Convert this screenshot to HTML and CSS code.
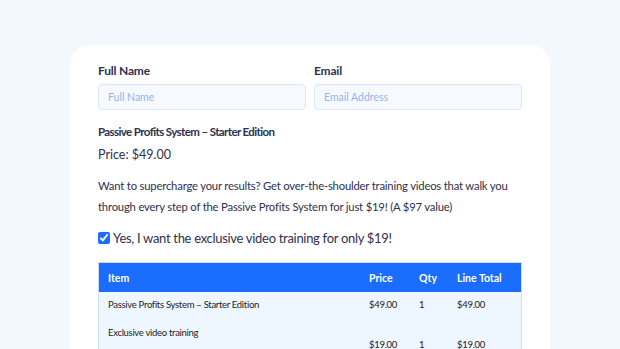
FILE: index.html
```html
<!DOCTYPE html>
<html lang="en">
<head>
    <meta charset="UTF-8">
    <meta name="viewport" content="width=device-width, initial-scale=1.0">
    <title>Checkout</title>
    <link rel="stylesheet" href="styles.css">
</head>
<body>
<main class="checkout">
    <div class="fields">
        <label class="field">
            <span class="field-label">Full Name</span>
            <input type="text" placeholder="Full Name">
        </label>
        <label class="field">
            <span class="field-label">Email</span>
            <input type="email" placeholder="Email Address">
        </label>
    </div>

    <h3 class="product">Passive Profits System – Starter Edition</h3>
    <p class="price">Price: $49.00</p>

    <p class="pitch">Want to supercharge your results? Get over-the-shoulder training videos that walk you through every step of the Passive Profits System for just $19! (A $97 value)</p>

    <label class="bump">
        <input type="checkbox" checked>
        <span>Yes, I want the exclusive video training for only $19!</span>
    </label>

    <table class="summary">
        <thead>
            <tr>
                <th>Item</th>
                <th class="col-price">Price</th>
                <th class="col-qty">Qty</th>
                <th class="col-total">Line Total</th>
            </tr>
        </thead>
        <tbody>
            <tr>
                <td>Passive Profits System – Starter Edition</td>
                <td>$49.00</td>
                <td>1</td>
                <td>$49.00</td>
            </tr>
            <tr class="bump-row">
                <td>Exclusive video training<br>&nbsp;</td>
                <td>$19.00</td>
                <td>1</td>
                <td>$19.00</td>
            </tr>
        </tbody>
    </table>
</main>
</body>
</html>
```

FILE: styles.css
```css
body {
    font-family: "Lato", "Noto Sans", sans-serif;
    background-color: #f3f7fe;
    color: #2f3150;
    margin: 0;
    padding: 45px 70px 0;
}
.checkout {
    background-color: #fff;
    border-radius: 20px;
    padding: 18px 28px 30px;
    min-height: 400px;
}
.fields {
    display: grid;
    grid-template-columns: 1fr 1fr;
    gap: 8px;
}
.field {
    display: flex;
    flex-direction: column;
    gap: 5px;
}
.field-label {
    font-size: 12px;
    line-height: 16px;
    font-weight: 700;
    letter-spacing: -0.2px;
    color: #2f3150;
}
.field input {
    height: 26px;
    box-sizing: border-box;
    border: 1px solid #d9e7fd;
    border-radius: 4px;
    background-color: #f6faff;
    padding: 0 9px;
    font-family: inherit;
    font-size: 10.5px;
}
.field input::placeholder {
    color: #93b3ee;
}
.product {
    font-size: 11.5px;
    line-height: 15px;
    font-weight: 700;
    letter-spacing: -0.6px;
    margin: 14px 0 0;
}
.price {
    font-size: 12.5px;
    line-height: 16px;
    margin: 8px 0 0;
}
.pitch {
    font-size: 11.3px;
    line-height: 21px;
    letter-spacing: -0.2px;
    margin: 12px 0 0;
}
.bump {
    display: flex;
    align-items: center;
    gap: 3px;
    font-size: 13px;
    line-height: 18px;
    letter-spacing: -0.3px;
    margin-top: 12px;
}
.bump input {
    margin: 0;
    width: 12px;
    height: 12px;
    accent-color: #1a6dff;
}
.summary {
    width: 100%;
    margin-top: 15px;
    border-collapse: collapse;
    border: 1px solid #cfdcee;
    table-layout: fixed;
}
.summary th {
    background-color: #1a6dff;
    color: #fff;
    font-size: 10.5px;
    font-weight: 700;
    text-align: left;
    height: 29px;
    padding: 0 9px;
    white-space: nowrap;
}
.summary td {
    background-color: #eef6ff;
    font-size: 9.5px;
    line-height: 14px;
    letter-spacing: -0.3px;
    padding: 6px 9px;
    color: #222;
}
.summary .col-price { width: 32px; }
.summary .col-qty { width: 20px; }
.summary .col-total { width: 55px; }
.bump-row td:first-child {
    line-height: 22px;
    padding-top: 4px;
}
```
